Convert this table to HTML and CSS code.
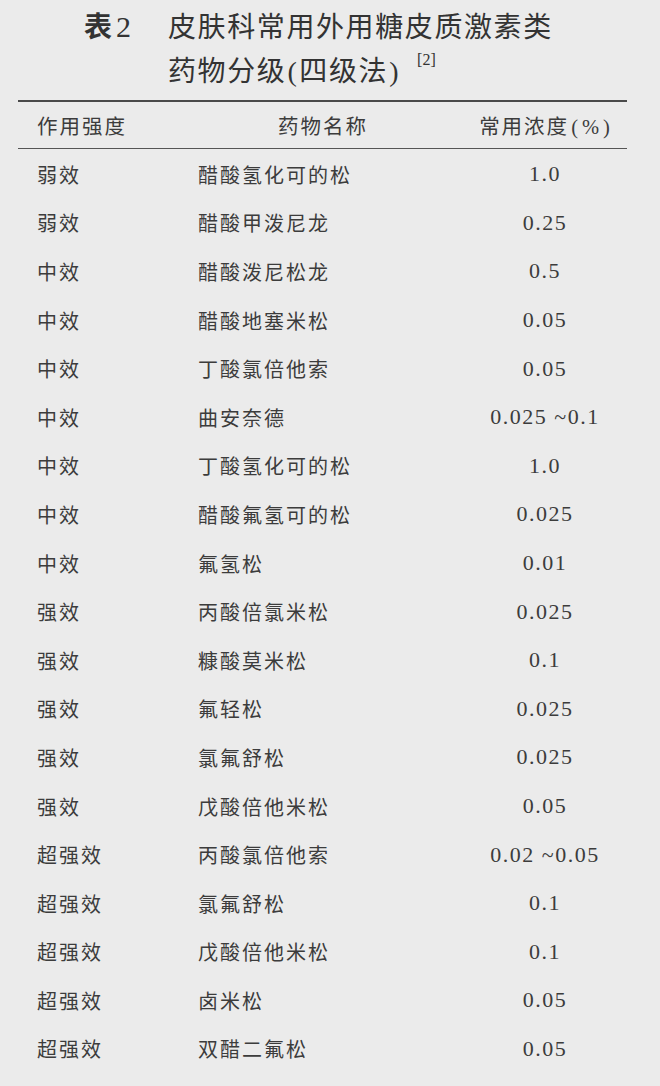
FILE: index.html
```html
<!DOCTYPE html>
<html lang="zh-CN">
<head>
<meta charset="utf-8">
<title>表2 皮肤科常用外用糖皮质激素类药物分级</title>
<link rel="stylesheet" href="styles.css">
</head>
<body>
<div class="page">
  <div class="caption">
    <div class="cap-label">表<span class="num">2</span></div>
    <div class="cap-text">
      <div class="cap-line">皮肤科常用外用糖皮质激素类</div>
      <div class="cap-line">药物分级<span class="paren">(</span>四级法<span class="paren">)</span><sup class="ref">[2]</sup></div>
    </div>
  </div>
  <div class="table">
    <div class="row head">
      <div class="c1">作用强度</div>
      <div class="c2">药物名称</div>
      <div class="c3">常用浓度<span class="paren">(</span><span class="num pct">%</span><span class="paren">)</span></div>
    </div>
    <div class="body">
      <div class="row"><div class="c1">弱效</div><div class="c2">醋酸氢化可的松</div><div class="c3 num">1.0</div></div>
      <div class="row"><div class="c1">弱效</div><div class="c2">醋酸甲泼尼龙</div><div class="c3 num">0.25</div></div>
      <div class="row"><div class="c1">中效</div><div class="c2">醋酸泼尼松龙</div><div class="c3 num">0.5</div></div>
      <div class="row"><div class="c1">中效</div><div class="c2">醋酸地塞米松</div><div class="c3 num">0.05</div></div>
      <div class="row"><div class="c1">中效</div><div class="c2">丁酸氯倍他索</div><div class="c3 num">0.05</div></div>
      <div class="row"><div class="c1">中效</div><div class="c2">曲安奈德</div><div class="c3 num">0.025 ~0.1</div></div>
      <div class="row"><div class="c1">中效</div><div class="c2">丁酸氢化可的松</div><div class="c3 num">1.0</div></div>
      <div class="row"><div class="c1">中效</div><div class="c2">醋酸氟氢可的松</div><div class="c3 num">0.025</div></div>
      <div class="row"><div class="c1">中效</div><div class="c2">氟氢松</div><div class="c3 num">0.01</div></div>
      <div class="row"><div class="c1">强效</div><div class="c2">丙酸倍氯米松</div><div class="c3 num">0.025</div></div>
      <div class="row"><div class="c1">强效</div><div class="c2">糠酸莫米松</div><div class="c3 num">0.1</div></div>
      <div class="row"><div class="c1">强效</div><div class="c2">氟轻松</div><div class="c3 num">0.025</div></div>
      <div class="row"><div class="c1">强效</div><div class="c2">氯氟舒松</div><div class="c3 num">0.025</div></div>
      <div class="row"><div class="c1">强效</div><div class="c2">戊酸倍他米松</div><div class="c3 num">0.05</div></div>
      <div class="row"><div class="c1">超强效</div><div class="c2">丙酸氯倍他索</div><div class="c3 num">0.02 ~0.05</div></div>
      <div class="row"><div class="c1">超强效</div><div class="c2">氯氟舒松</div><div class="c3 num">0.1</div></div>
      <div class="row"><div class="c1">超强效</div><div class="c2">戊酸倍他米松</div><div class="c3 num">0.1</div></div>
      <div class="row"><div class="c1">超强效</div><div class="c2">卤米松</div><div class="c3 num">0.05</div></div>
      <div class="row"><div class="c1">超强效</div><div class="c2">双醋二氟松</div><div class="c3 num">0.05</div></div>
    </div>
  </div>
</div>
</body>
</html>
```

FILE: styles.css
```css
html, body {
  margin: 0;
  padding: 0;
  background: #ebebeb;
}

body {
  font-family: "Noto Sans CJK SC", "Noto Sans", sans-serif;
  color: #3c3c3c;
}

.page {
  width: 660px;
  height: 1086px;
  overflow: hidden;
  padding-top: 3px;
  box-sizing: border-box;
}

.num,
.paren {
  font-family: "Liberation Serif", "DejaVu Serif", serif;
}

.caption {
  display: flex;
  padding-left: 84px;
  font-size: 28px;
  line-height: 44px;
  color: #333;
}

.cap-label {
  width: 84px;
  font-weight: 700;
  letter-spacing: 2px;
}

.cap-label .num {
  font-weight: 400;
  font-size: 30px;
  margin-left: 2px;
}

.cap-text {
  letter-spacing: 1.6px;
}

.cap-line .paren {
  font-size: 28px;
  margin: 0 1px;
}

.ref {
  font-family: "Liberation Serif", serif;
  font-size: 16px;
  letter-spacing: 0;
  margin-left: 16px;
  vertical-align: 16px;
  line-height: 0;
}

.table {
  margin: 6px 33px 0 18px;
  border-top: 2px solid #4a4a4a;
}

.row {
  display: grid;
  grid-template-columns: 161px 250px 1fr;
  padding-left: 19px;
  height: 48.6px;
  align-items: center;
  font-size: 20px;
  letter-spacing: 2px;
}

.row.head {
  height: 46px;
  border-bottom: 1.5px solid #555;
  font-size: 20.5px;
}

.head .c2 {
  text-align: center;
}

.head .c3 {
  text-align: center;
  padding-left: 18px;
  white-space: nowrap;
}

.head .paren {
  margin: 0 2px;
}

.c3 {
  text-align: center;
  padding-left: 15px;
}

.c3.num {
  font-size: 22px;
  letter-spacing: 1.5px;
  white-space: nowrap;
}

.body {
  padding-top: 1px;
}
```
